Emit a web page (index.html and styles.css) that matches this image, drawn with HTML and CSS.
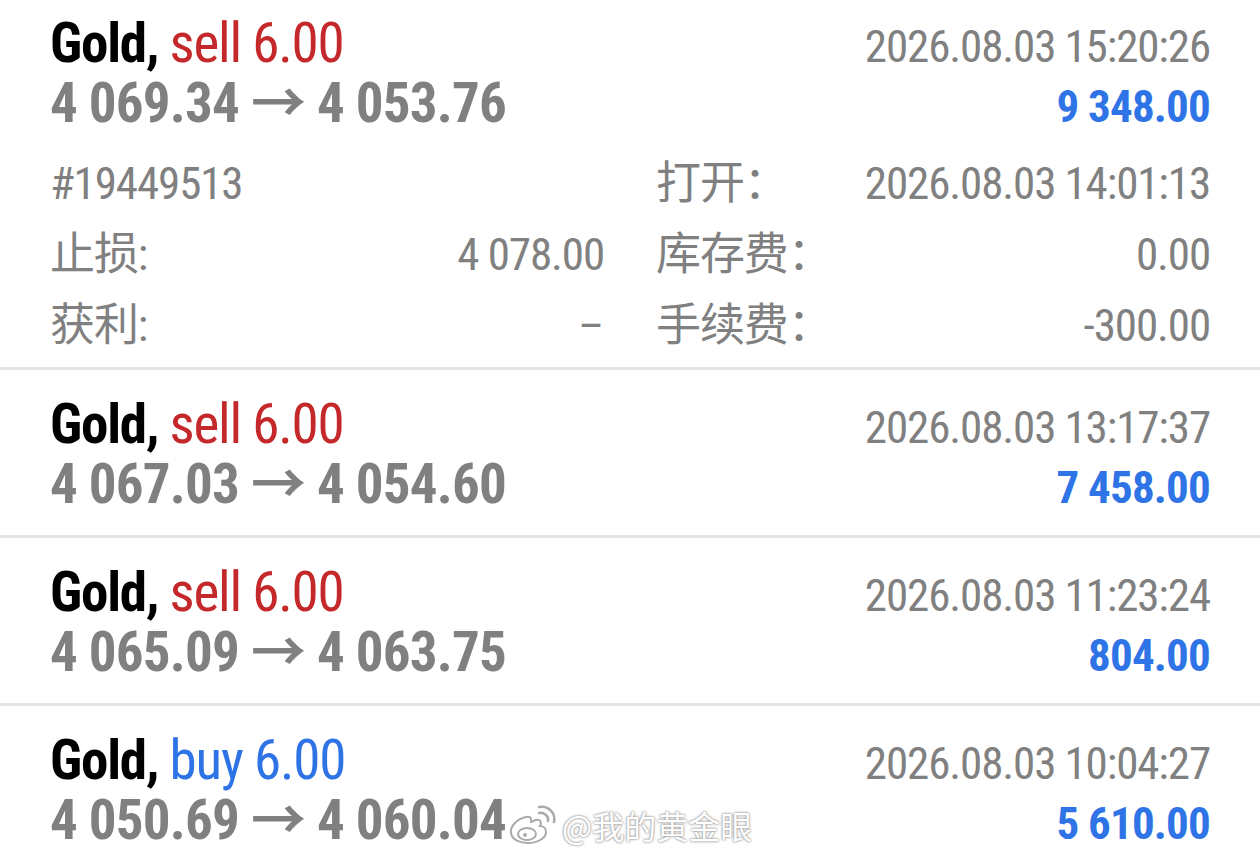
FILE: index.html
```html
<!DOCTYPE html>
<html lang="zh">
<head>
    <meta charset="UTF-8">
    <meta name="viewport" content="width=device-width, initial-scale=1.0">
    <title>History</title>
    <link rel="stylesheet" href="styles.css">
</head>
<body>
    <div class="list">
        <!-- expanded deal -->
        <div class="trade trade-open">
            <div class="line">
                <div class="title"><span class="symbol">Gold,</span> <span class="sell">sell 6.00</span></div>
                <div class="time">2026.08.03 15:20:26</div>
            </div>
            <div class="line">
                <div class="prices">4 069.34 → 4 053.76</div>
                <div class="profit">9 348.00</div>
            </div>
            <div class="details">
                <div class="cell"><span>#19449513</span></div>
                <div class="cell"><span>打开：</span><span>2026.08.03 14:01:13</span></div>
                <div class="cell"><span>止损:</span><span>4 078.00</span></div>
                <div class="cell"><span>库存费：</span><span>0.00</span></div>
                <div class="cell"><span>获利:</span><span class="empty">–</span></div>
                <div class="cell"><span>手续费：</span><span>-300.00</span></div>
            </div>
        </div>

        <div class="trade">
            <div class="line">
                <div class="title"><span class="symbol">Gold,</span> <span class="sell">sell 6.00</span></div>
                <div class="time">2026.08.03 13:17:37</div>
            </div>
            <div class="line">
                <div class="prices">4 067.03 → 4 054.60</div>
                <div class="profit">7 458.00</div>
            </div>
        </div>

        <div class="trade">
            <div class="line">
                <div class="title"><span class="symbol">Gold,</span> <span class="sell">sell 6.00</span></div>
                <div class="time">2026.08.03 11:23:24</div>
            </div>
            <div class="line">
                <div class="prices">4 065.09 → 4 063.75</div>
                <div class="profit">804.00</div>
            </div>
        </div>

        <div class="trade">
            <div class="line">
                <div class="title"><span class="symbol">Gold,</span> <span class="buy">buy 6.00</span></div>
                <div class="time">2026.08.03 10:04:27</div>
            </div>
            <div class="line">
                <div class="prices">4 050.69 → 4 060.04</div>
                <div class="profit">5 610.00</div>
            </div>
        </div>
    </div>

    <!-- watermark -->
    <div class="watermark">
        <svg width="48" height="40" viewBox="0 0 48 40">
            <path d="M18 12 C8 14 2 22 3 28 C4 35 12 38 20 38 C30 38 38 33 38 27 C38 23 35 21 32 21 C34 17 32 14 28 15 C25 16 24 17 23 17 C24 13 22 11 18 12 Z" fill="#fff" stroke="#aaa" stroke-width="2"/>
            <ellipse cx="19" cy="29" rx="9" ry="6" fill="#fff" stroke="#aaa" stroke-width="2"/>
            <circle cx="17" cy="30" r="2" fill="#aaa"/>
            <path d="M31 8 C36 7 41 11 40 16" fill="none" stroke="#aaa" stroke-width="2.5" stroke-linecap="round"/>
            <path d="M31 2 C40 0 48 8 46 17" fill="none" stroke="#aaa" stroke-width="2.5" stroke-linecap="round"/>
        </svg>
        <span>@我的黄金眼</span>
    </div>
</body>
</html>
```

FILE: styles.css
```css
body { margin: 0; background: #fff; font-family: "Roboto", "Noto Sans CJK SC", sans-serif; font-stretch: 75%; color: #808080; overflow: hidden; }
.list { display: flex; flex-direction: column; }
.trade { padding: 24px 50px 21px; border-bottom: 3px solid #e4e4e4; }
.trade-open { padding-top: 13px; padding-bottom: 6px; }
.line { display: flex; justify-content: space-between; align-items: baseline; line-height: 60px; }
.title { font-size: 55px; letter-spacing: -1.2px; }
.symbol { color: #000; font-weight: 700; }
.sell { color: #c4282a; }
.buy { color: #2f74e6; }
.prices { font-size: 55px; font-weight: 700; letter-spacing: -0.8px; }
.time { font-size: 45px; line-height: 1; letter-spacing: -1.1px; }
.profit { font-size: 45px; line-height: 1; font-weight: 700; color: #2f74e6; letter-spacing: -0.8px; }
.details { display: grid; grid-template-columns: 1fr 1fr; column-gap: 52px; margin-top: 15px; font-size: 45px; line-height: 71px; letter-spacing: -1.1px; }
.cell { display: flex; justify-content: space-between; }
.empty { letter-spacing: 0; }
.watermark { position: absolute; left: 508px; top: 802px; display: flex; align-items: center; gap: 6px; font-family: "Noto Sans CJK SC", sans-serif; font-size: 32px; color: #fff; text-shadow: 0 0 2px #888, 0 0 3px #aaa; }
```
